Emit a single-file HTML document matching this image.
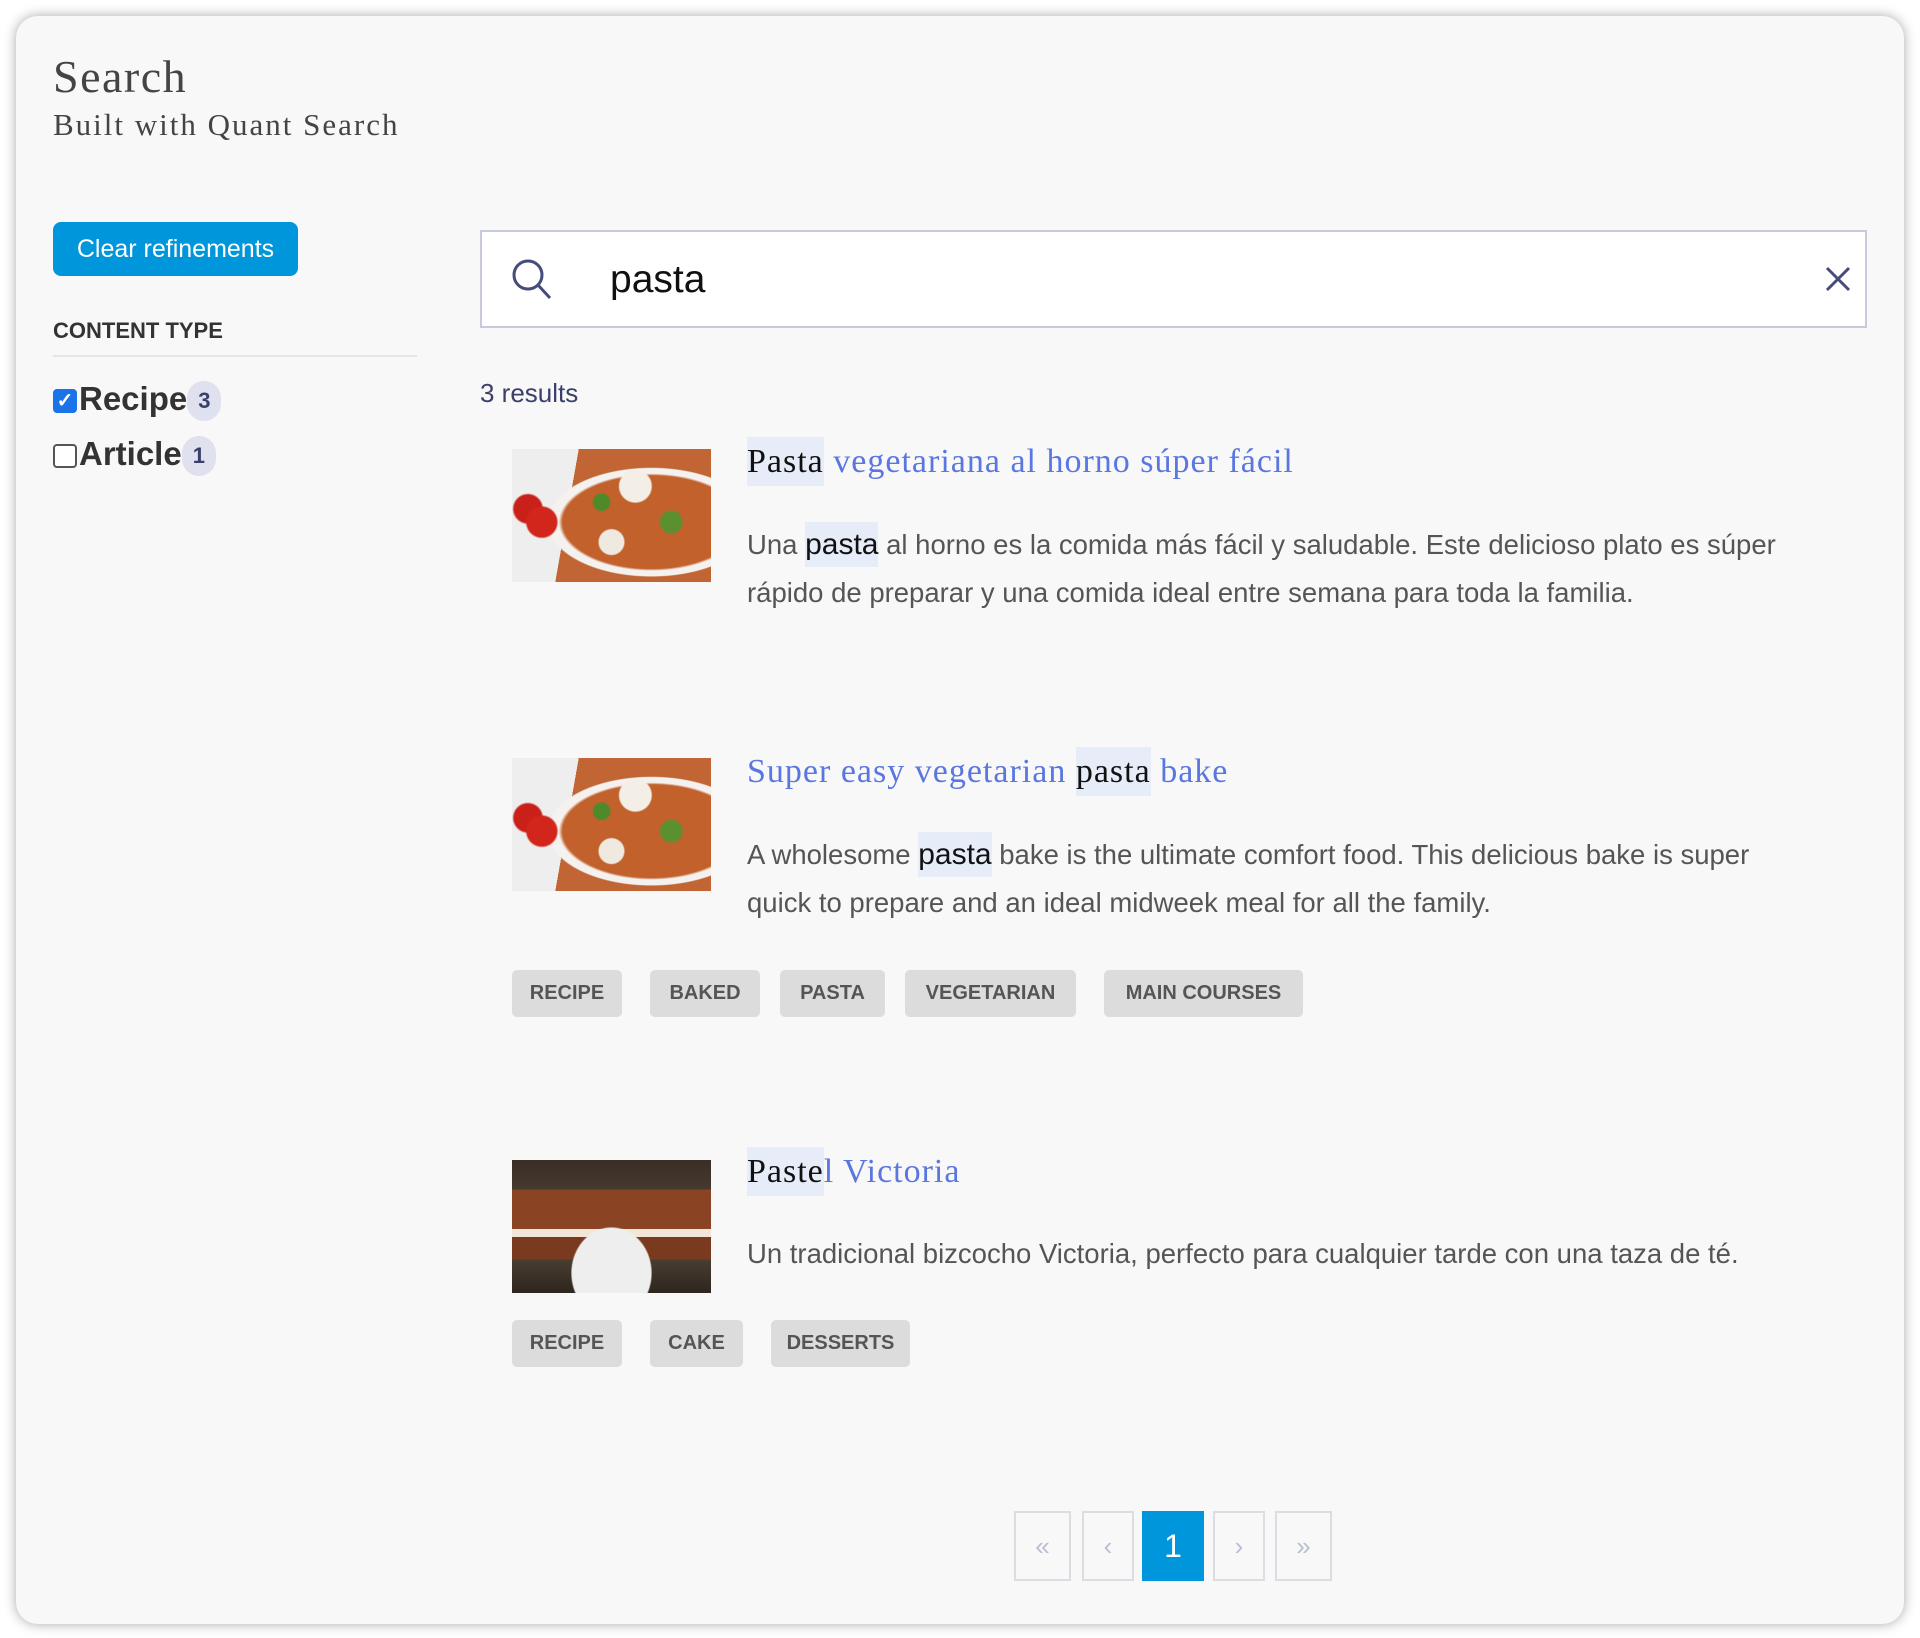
<!DOCTYPE html>
<html><head><meta charset="utf-8"><style>
*{margin:0;padding:0;box-sizing:border-box}
body{width:1920px;height:1638px;background:#fff;position:relative;overflow:hidden;font-family:"Liberation Sans",sans-serif}
.card{position:absolute;left:16px;top:16px;width:1888px;height:1608px;background:#f8f8f8;border-radius:22px;box-shadow:0 0 12px rgba(0,0,0,.35)}
.a{position:absolute;white-space:nowrap}
.serif{font-family:"Liberation Serif","DejaVu Serif",serif}
.btn{left:53px;top:222px;width:245px;height:54px;background:#0096db;color:#fff;border-radius:8px;font-size:25px;line-height:54px;text-align:center}
.cnt{display:inline-block;background:#dfe2ee;color:#3a3f6b;border-radius:20px;font-size:22px;padding:0 11px;line-height:40px;vertical-align:middle;font-weight:bold}
.cb{display:inline-block;width:24px;height:24px;border:2px solid #555;border-radius:4px;vertical-align:middle;margin-right:2px}
.img{position:absolute;width:199px;height:133px;overflow:hidden}
.pasta{background:radial-gradient(circle at 15% 55%,#d2261c 0 8%,transparent 9%),radial-gradient(circle at 8% 45%,#c9201a 0 7%,transparent 8%),radial-gradient(circle at 62% 28%,#f3efe7 0 10%,transparent 11%),radial-gradient(circle at 50% 70%,#efe9df 0 9%,transparent 10%),radial-gradient(circle at 45% 40%,#4f8a2a 0 6%,transparent 7%),radial-gradient(circle at 80% 55%,#5b9030 0 6%,transparent 7%),radial-gradient(ellipse at 70% 55%,#c2612b 0 45%,#f4f1ee 47% 52%,transparent 53%),linear-gradient(100deg,#eee 0 30%,#c06533 30%)}
.cake{background:radial-gradient(ellipse at 50% 85%,#eee 0 28%,transparent 29%),linear-gradient(180deg,transparent 0 22%,#8a4424 22% 52%,#f2e6d8 52% 58%,#7a3a20 58% 75%,transparent 75%),linear-gradient(180deg,#3a2e26 0,#5a4c3d 60%,#2d251e)}
.t{font-size:34px;color:#5a76e0;letter-spacing:1px}
.t b{font-weight:normal;color:#111;background:#e6ecf8;padding:6px 0}
.d{font-size:27.5px;color:#555;line-height:48px;width:1060px;white-space:normal}
.d b{font-weight:normal;color:#111;background:#e6ecf8;padding:6px 0;font-size:30px}
.tag{position:absolute;height:47px;background:#dcdcdc;border-radius:5px;color:#555;font-weight:bold;font-size:20px;line-height:47px;text-align:center}
.pg{position:absolute;top:1511px;height:70px;border:2px solid #dcdde3;color:#b8bfd0;font-size:26px;line-height:66px;text-align:center}
</style></head><body>
<div class="card"></div>
<div class="a serif" style="left:53px;top:50px;font-size:46px;color:#444;letter-spacing:1.5px">Search</div>
<div class="a serif" style="left:53px;top:107px;font-size:31px;color:#444;letter-spacing:2px">Built with Quant Search</div>
<div class="a btn">Clear refinements</div>
<div class="a" style="left:53px;top:318px;font-size:22px;font-weight:bold;color:#333">CONTENT TYPE</div>
<div class="a" style="left:53px;top:355px;width:364px;height:2px;background:#e6e6e6"></div>
<div class="a" style="left:53px;top:380px;font-size:33px;font-weight:bold;color:#333"><span class="cb" style="background:#1a73e8;border-color:#1a73e8;color:#fff;font-size:20px;line-height:20px;text-align:center">✓</span>Recipe<span class="cnt">3</span></div>
<div class="a" style="left:53px;top:435px;font-size:33px;font-weight:bold;color:#333"><span class="cb" style="background:#fff"></span>Article<span class="cnt">1</span></div>

<div class="a" style="left:480px;top:230px;width:1387px;height:98px;border:2px solid #c7c9dc;background:#fff"></div>
<svg class="a" style="left:510px;top:257px" width="45" height="45" viewBox="0 0 45 45"><circle cx="18" cy="18" r="14" fill="none" stroke="#454b7a" stroke-width="3"/><line x1="28" y1="28" x2="40" y2="41" stroke="#454b7a" stroke-width="3"/></svg>
<div class="a" style="left:610px;top:258px;font-size:39px;color:#111">pasta</div>
<svg class="a" style="left:1825px;top:266px" width="26" height="26" viewBox="0 0 26 26"><path d="M2 2L24 24M24 2L2 24" stroke="#454b7a" stroke-width="3"/></svg>

<div class="a" style="left:480px;top:378px;font-size:26px;color:#3a3f6b">3 results</div>

<div class="img pasta" style="left:512px;top:449px"></div>
<div class="a serif t" style="left:747px;top:443px"><b>Pasta</b> vegetariana al horno súper fácil</div>
<div class="a d" style="left:747px;top:521px">Una <b>pasta</b> al horno es la comida más fácil y saludable. Este delicioso plato es súper rápido de preparar y una comida ideal entre semana para toda la familia.</div>

<div class="img pasta" style="left:512px;top:758px"></div>
<div class="a serif t" style="left:747px;top:753px">Super easy vegetarian <b>pasta</b> bake</div>
<div class="a d" style="left:747px;top:831px">A wholesome <b>pasta</b> bake is the ultimate comfort food. This delicious bake is super quick to prepare and an ideal midweek meal for all the family.</div>
<div class="tag" style="left:512px;top:970px;width:110px">RECIPE</div>
<div class="tag" style="left:650px;top:970px;width:110px">BAKED</div>
<div class="tag" style="left:780px;top:970px;width:105px">PASTA</div>
<div class="tag" style="left:905px;top:970px;width:171px">VEGETARIAN</div>
<div class="tag" style="left:1104px;top:970px;width:199px">MAIN COURSES</div>

<div class="img cake" style="left:512px;top:1160px"></div>
<div class="a serif t" style="left:747px;top:1153px"><b>Paste</b>l Victoria</div>
<div class="a d" style="left:747px;top:1230px;width:1100px">Un tradicional bizcocho Victoria, perfecto para cualquier tarde con una taza de té.</div>
<div class="tag" style="left:512px;top:1320px;width:110px">RECIPE</div>
<div class="tag" style="left:650px;top:1320px;width:93px">CAKE</div>
<div class="tag" style="left:771px;top:1320px;width:139px">DESSERTS</div>

<div class="pg" style="left:1014px;width:57px">«</div>
<div class="pg" style="left:1082px;width:52px">‹</div>
<div class="pg" style="left:1142px;width:62px;background:#0096db;border-color:#0096db;color:#fff;font-size:32px">1</div>
<div class="pg" style="left:1213px;width:52px">›</div>
<div class="pg" style="left:1275px;width:57px">»</div>
</body></html>
